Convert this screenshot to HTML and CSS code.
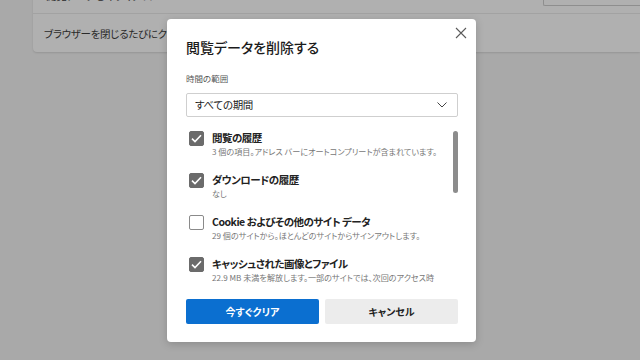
FILE: index.html
```html
<!DOCTYPE html>
<html lang="ja">
<head>
<meta charset="utf-8">
<link rel="stylesheet" href="styles.css">
</head>
<body>
<div class="page">
  <div class="card">
    <div class="row row-top">
      <span class="row-text">閲覧データを今すぐクリア</span>
      <span class="row-btn">クリアするデータの選択</span>
    </div>
    <div class="row">
      <span class="row-text">ブラウザーを閉じるたびにクリアするデータを選択する</span>
    </div>
  </div>
</div>

<div class="dialog">
  <button class="close" aria-label="閉じる">
    <svg width="12" height="12" viewBox="0 0 12 12"><path d="M1 1 L11 11 M11 1 L1 11" stroke="#5a5a5a" stroke-width="1.1" fill="none"/></svg>
  </button>
  <h1 class="title">閲覧データを削除する</h1>
  <div class="field-label">時間の範囲</div>
  <div class="select">
    <span>すべての期間</span>
    <svg width="10" height="6" viewBox="0 0 10 6"><path d="M0.5 0.5 L5 5 L9.5 0.5" stroke="#444" stroke-width="1" fill="none"/></svg>
  </div>
  <div class="list">
    <div class="item">
      <span class="cb checked"><svg width="11" height="9" viewBox="0 0 11 9"><path d="M1 4.6 L4 7.5 L10 1.3" stroke="#fff" stroke-width="1.6" fill="none"/></svg></span>
      <div class="item-text">
        <div class="item-label">閲覧の履歴</div>
        <div class="item-sub">3 個の項目。アドレス バーにオートコンプリートが含まれています。</div>
      </div>
    </div>
    <div class="item">
      <span class="cb checked"><svg width="11" height="9" viewBox="0 0 11 9"><path d="M1 4.6 L4 7.5 L10 1.3" stroke="#fff" stroke-width="1.6" fill="none"/></svg></span>
      <div class="item-text">
        <div class="item-label">ダウンロードの履歴</div>
        <div class="item-sub">なし</div>
      </div>
    </div>
    <div class="item">
      <span class="cb"></span>
      <div class="item-text">
        <div class="item-label">Cookie およびその他のサイト データ</div>
        <div class="item-sub">29 個のサイトから。ほとんどのサイトからサインアウトします。</div>
      </div>
    </div>
    <div class="item">
      <span class="cb checked"><svg width="11" height="9" viewBox="0 0 11 9"><path d="M1 4.6 L4 7.5 L10 1.3" stroke="#fff" stroke-width="1.6" fill="none"/></svg></span>
      <div class="item-text">
        <div class="item-label">キャッシュされた画像とファイル</div>
        <div class="item-sub">22.9 MB 未満を解放します。一部のサイトでは、次回のアクセス時に読み込みが遅くなる可能性があります。</div>
      </div>
    </div>
    <div class="scroll-thumb"></div>
  </div>
  <div class="actions">
    <button class="btn primary">今すぐクリア</button>
    <button class="btn secondary">キャンセル</button>
  </div>
</div>
</body>
</html>
```

FILE: styles.css
```css
* { box-sizing: border-box; }
html, body { margin: 0; padding: 0; }
body {
  width: 640px;
  height: 360px;
  overflow: hidden;
  background: #a9a9a9;
  font-family: "Noto Sans CJK JP", "Noto Sans", sans-serif;
  font-feature-settings: "palt";
  position: relative;
}

.page {
  padding-left: 33px;
  margin-top: -24px;
}
.card {
  width: 607px;
  background: #b0b0b0;
  border-radius: 4px 0 0 4px;
  box-shadow: 0 1px 2px rgba(0,0,0,0.12);
}
.row {
  height: 38px;
  display: flex;
  align-items: center;
  padding-left: 11px;
  color: #2a2a2a;
  font-size: 10.5px;
  letter-spacing: -0.3px;
}
.row-top {
  border-bottom: 1px solid #a2a2a2;
  justify-content: space-between;
  align-items: flex-end;
  padding-bottom: 10px;
  padding-left: 13px;
}
.row-top .row-text { line-height: 14px; }
.row-btn {
  width: 97px;
  height: 20px;
  border: 1px solid #8e8e8e;
  border-right: 0;
  border-radius: 2px 0 0 2px;
  font-size: 9px;
  padding-left: 8px;
  line-height: 16px;
  color: #333;
  margin-bottom: -3px;
  overflow: hidden;
  white-space: nowrap;
}

.dialog {
  position: absolute;
  left: 167px;
  top: 19px;
  width: 309px;
  height: 323px;
  background: #fff;
  border-radius: 4px;
  box-shadow: 0 2px 8px rgba(0,0,0,0.18);
  padding: 17px 18px 18px 19px;
  display: flex;
  flex-direction: column;
}
.close {
  position: absolute;
  left: 288px;
  top: 8px;
  width: 12px;
  height: 12px;
  padding: 0;
  border: 0;
  background: none;
  display: flex;
}
.title {
  margin: 0;
  font-size: 14px;
  line-height: 22px;
  font-weight: 500;
  color: #1b1b1b;
}
.field-label {
  margin-top: 14px;
  font-size: 8.5px;
  line-height: 12px;
  color: #555;
}
.select {
  margin-top: 9px;
  height: 24px;
  border: 1px solid #cfcfcf;
  border-radius: 2px;
  display: flex;
  align-items: center;
  justify-content: space-between;
  padding: 0 10px 0 8px;
  font-size: 10.5px;
  letter-spacing: -0.3px;
  color: #222;
}
.list {
  position: relative;
  margin-top: 8px;
  height: 161px;
  overflow: hidden;
  padding-top: 6px;
}
.item {
  display: flex;
  gap: 8px;
  padding-left: 3px;
  height: 42px;
}
.cb {
  flex: none;
  width: 15px;
  height: 15px;
  border-radius: 2px;
  border: 1px solid #8a8a8a;
  background: #fff;
  display: flex;
  align-items: center;
  justify-content: center;
}
.cb.checked {
  background: #6b6b6b;
  border-color: #6b6b6b;
}
.item-text {
  width: 227px;
}
.item-label {
  font-size: 10.5px;
  line-height: 16px;
  font-weight: 700;
  letter-spacing: -0.5px;
  color: #222;
  margin-top: -1px;
}
.item-sub {
  font-size: 8.1px;
  line-height: 12px;
  color: #777;
}
.scroll-thumb {
  position: absolute;
  left: 267px;
  top: 6px;
  width: 5px;
  height: 62px;
  border-radius: 3px;
  background: #8c8c8c;
}
.actions {
  margin-top: 14px;
  display: flex;
  gap: 6px;
}
.btn {
  flex: 1;
  height: 25px;
  border: 0;
  border-radius: 2px;
  font-family: inherit;
  font-feature-settings: "palt";
  font-size: 10px;
  font-weight: 700;
  padding: 0;
}
.primary { background: #0b6fd0; color: #fff; }
.secondary { background: #ececec; color: #222; }
```
